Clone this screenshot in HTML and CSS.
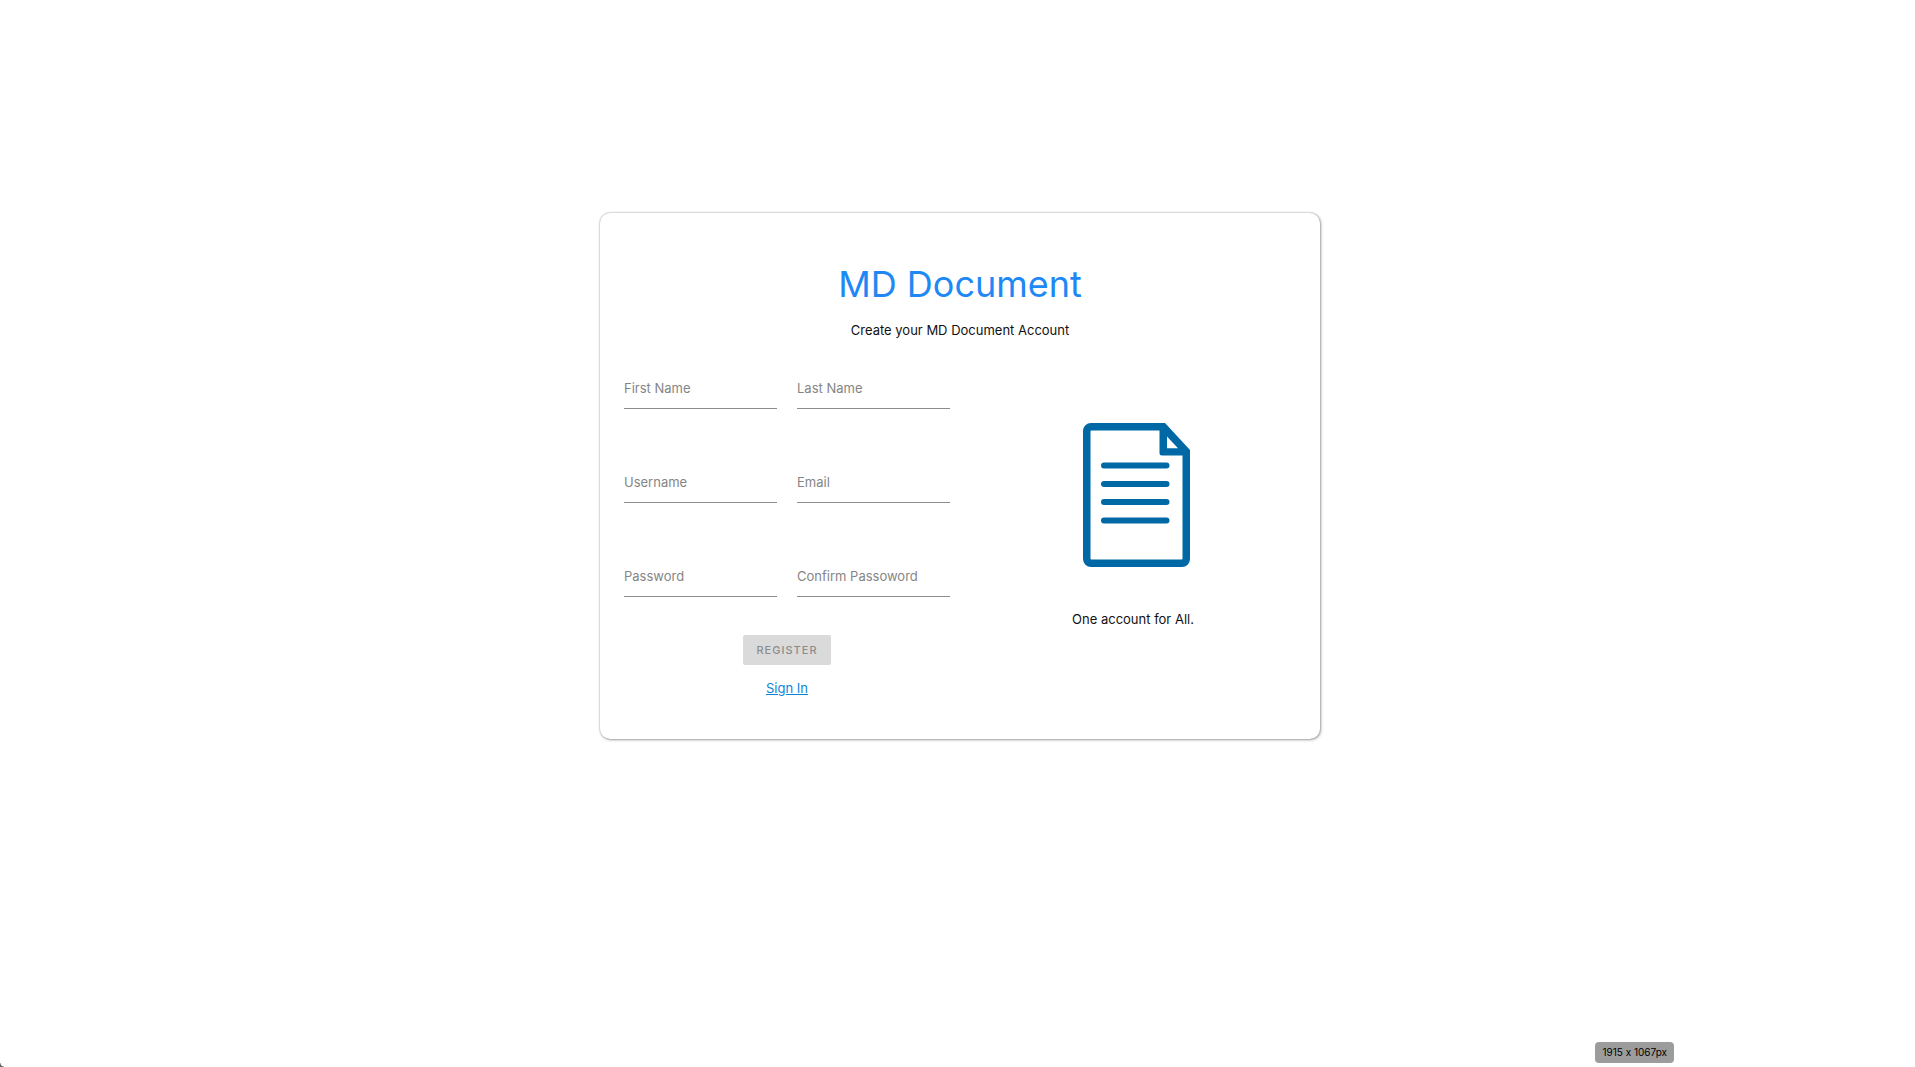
FILE: index.html
```html
<!DOCTYPE html>
<html lang="en">
<head>
  <meta charset="utf-8">
  <meta name="viewport" content="width=device-width, initial-scale=1">
  <title>MD Document</title>
  <link rel="stylesheet" href="styles.css">
</head>
<body>
  <main class="card">
    <header class="card-header">
      <h1 class="title">MD Document</h1>
      <p class="subtitle">Create your MD Document Account</p>
    </header>
    <div class="card-body">
      <form class="form">
        <div class="fields">
          <div class="field">
            <label class="field-label" for="first-name">First Name</label>
            <input class="field-input" id="first-name" type="text">
          </div>
          <div class="field">
            <label class="field-label" for="last-name">Last Name</label>
            <input class="field-input" id="last-name" type="text">
          </div>
          <div class="field">
            <label class="field-label" for="username">Username</label>
            <input class="field-input" id="username" type="text">
          </div>
          <div class="field">
            <label class="field-label" for="email">Email</label>
            <input class="field-input" id="email" type="email">
          </div>
          <div class="field">
            <label class="field-label" for="password">Password</label>
            <input class="field-input" id="password" type="password">
          </div>
          <div class="field">
            <label class="field-label" for="confirm">Confirm Passoword</label>
            <input class="field-input" id="confirm" type="password">
          </div>
        </div>
        <button class="register" type="submit" disabled>REGISTER</button>
        <a class="sign-in" href="#">Sign In</a>
      </form>
      <section class="promo">
        <svg class="document" viewBox="0 0 107 144" aria-hidden="true">
          <path fill="#0069a5" fill-rule="evenodd" d="M8 0H82L107 27V136a8 8 0 0 1-8 8H8a8 8 0 0 1-8-8V8a8 8 0 0 1 8-8Z M8.500 7.500a1 1 0 0 0-1 1V135.500a1 1 0 0 0 1 1H98.500a1 1 0 0 0 1-1V32.500H79a2.500 2.500 0 0 1-2.500-2.500V7.500Z M84 13.500V25.200H95Z"/>
          <path fill="none" stroke="#0069a5" stroke-width="6" stroke-linecap="round" d="M21 42.500H83.500M21 61H83.500M21 79H83.500M21 97.500H83.500"/>
        </svg>
        <p class="promo-text">One account for All.</p>
      </section>
    </div>
  </main>
  <div class="size-badge">1915 x 1067px</div>
  <div class="window-corner"></div>
</body>
</html>
```
FILE: styles.css
```css
* {
  box-sizing: border-box;
}

body {
  margin: 0;
  padding-left: 5px;
  background: #fff;
  color: #111;
  font: 13px/20px Inter, "Liberation Sans", sans-serif;
}

.card {
  width: calc(100% - 32px);
  max-width: 720px;
  margin: 20vh auto 32px;
  padding: 47px 24px 41px;
  border-radius: 10px;
  box-shadow: 0 0 2px rgba(0, 0, 0, 0.4), 1px 1px 3px rgba(0, 0, 0, 0.3);
}

.card-header {
  text-align: center;
}

.title {
  margin: 0;
  color: #1e88f5;
  font-size: 36px;
  line-height: 48px;
  font-weight: 400;
}

.subtitle {
  margin: 12px 0 0;
}

.card-body {
  display: grid;
  grid-template-columns: 1fr 1fr;
  gap: 20px;
  margin-top: 33px;
}

.form {
  display: flex;
  flex-direction: column;
  align-items: center;
}

.fields {
  display: grid;
  grid-template-columns: 1fr 1fr;
  gap: 58px 20px;
  width: 100%;
}

/* The label rests over its empty input, sharing one grid cell. */
.field {
  display: grid;
}

.field-label,
.field-input {
  grid-area: 1 / 1;
}

.field-label {
  padding-top: 5px;
  color: #858585;
  pointer-events: none;
}

.field-input {
  width: 100%;
  height: 36px;
  padding: 0;
  border: 0;
  border-bottom: 1px solid #8c8c8c;
  background: transparent;
  font: inherit;
}

.register {
  height: 30px;
  margin-top: 38px;
  padding: 0 13px;
  border: 0;
  border-radius: 2px;
  background: #dadada;
  color: #8c8c8c;
  font: 500 11px/30px Inter, "Liberation Sans", sans-serif;
  letter-spacing: 1px;
}

.sign-in {
  margin-top: 13px;
  color: #0b84d8;
}

.promo {
  display: flex;
  flex-direction: column;
  align-items: center;
  padding-top: 50px;
}

.document {
  width: 107px;
  height: 144px;
  margin-left: 6px;
}

.promo-text {
  margin: 42px 0 0;
}

.size-badge {
  position: fixed;
  right: 241px;
  bottom: 4px;
  padding: 0 7px;
  border-radius: 4px;
  background: #9c9c9c;
  color: #000;
  font-size: 10px;
  line-height: 21px;
  font-feature-settings: "calt" 0;
}

.window-corner {
  position: fixed;
  left: 0;
  bottom: 0;
  width: 4px;
  height: 4px;
  background: radial-gradient(circle at 100% 0, transparent 3px, #6b635e 4px);
}
```
